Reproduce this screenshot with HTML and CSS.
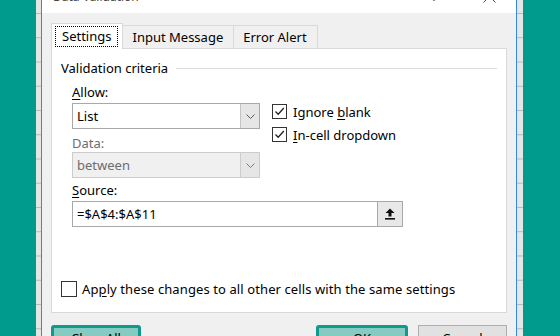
FILE: index.html
```html
<!doctype html>
<html lang="en">
  <head>
    <meta charset="UTF-8" />
    <title>Data Validation</title>
    <link rel="stylesheet" href="styles.css">
  </head>
  <body>
    <div class="screen">
      <div class="sheet-fill"></div>
      <div class="grid-strip"></div>

      <div class="dialog">
        <div class="title-bar">
          <span class="title-text">Data Validation</span>
          <span class="title-help">?</span>
          <svg class="title-close" width="13" height="13" viewBox="0 0 13 13">
            <path d="M0.5 0.5 L12.5 12.5 M12.5 0.5 L0.5 12.5" stroke="#444" stroke-width="1" fill="none" />
          </svg>
        </div>

        <div class="dialog-body">
          <div class="tabs">
            <div class="tab tab-active"><span class="focus-ring">Settings</span></div>
            <div class="tab">Input Message</div>
            <div class="tab">Error Alert</div>
          </div>

          <div class="panel">
            <div class="group-title">
              <span>Validation criteria</span>
              <div class="group-line"></div>
            </div>

            <div class="criteria">
              <div class="criteria-top">
                <div class="fields">
                  <div class="field-label"><u>A</u>llow:</div>
                  <div class="combo">
                    <div class="combo-value">List</div>
                    <div class="combo-button">
                      <svg width="9" height="5" viewBox="0 0 9 5"><path d="M0.5 0.5 L4.5 4.5 L8.5 0.5" stroke="#5c5c5c" fill="none" /></svg>
                    </div>
                  </div>

                  <div class="field-label field-label-data is-disabled">Data:</div>
                  <div class="combo combo-disabled">
                    <div class="combo-value">between</div>
                    <div class="combo-button">
                      <svg width="9" height="5" viewBox="0 0 9 5"><path d="M0.5 0.5 L4.5 4.5 L8.5 0.5" stroke="#7a7a7a" fill="none" /></svg>
                    </div>
                  </div>
                </div>

                <div class="options">
                  <div class="check-row">
                    <span class="check-box">
                      <svg width="13" height="13" viewBox="0 0 13 13"><path d="M2.5 6.5 L5.2 9.2 L10.8 3" stroke="#222" stroke-width="1.3" fill="none" /></svg>
                    </span>
                    <span>Ignore <u>b</u>lank</span>
                  </div>
                  <div class="check-row">
                    <span class="check-box">
                      <svg width="13" height="13" viewBox="0 0 13 13"><path d="M2.5 6.5 L5.2 9.2 L10.8 3" stroke="#222" stroke-width="1.3" fill="none" /></svg>
                    </span>
                    <span><u>I</u>n-cell dropdown</span>
                  </div>
                </div>
              </div>

              <div class="field-label field-label-source"><u>S</u>ource:</div>
              <div class="source-input">
                <div class="combo-value">=$A$4:$A$11</div>
                <div class="source-button">
                  <svg width="10" height="12" viewBox="0 0 10 12">
                    <path d="M5 0.5 L9.5 5 H6.5 V8.5 H3.5 V5 H0.5 Z" fill="#111" />
                    <rect x="0" y="10" width="10" height="1.6" fill="#111" />
                  </svg>
                </div>
              </div>
            </div>

            <div class="check-row apply-row">
              <span class="check-box check-box-empty"></span>
              <span class="apply-text">Ap<u>p</u>ly these changes to all other cells with the same settings</span>
            </div>
          </div>

          <div class="actions">
            <div class="btn btn-marked btn-clear">Clear All</div>
            <div class="btn btn-marked btn-ok">OK</div>
            <div class="btn">Cancel</div>
          </div>
        </div>
      </div>

      <div class="grid-strip grid-strip-right"></div>
      <div class="sheet-fill sheet-fill-right"></div>
    </div>
  </body>
</html>
```

FILE: styles.css
```css
body {
  margin: 0;
  padding: 0;
  font-family: "Noto Sans", "Open Sans", sans-serif;
  font-size: 13px;
  color: #000;
}

u {
  text-underline-offset: 2px;
}

.screen {
  display: flex;
  width: 560px;
  height: 336px;
  overflow: hidden;
  background: #009b8c;
}

.sheet-fill {
  width: 36px;
  flex: none;
}

.sheet-fill-right {
  flex: 1;
}

/* spreadsheet rows peeking out beside the dialog */
.grid-strip {
  width: 5px;
  flex: none;
  background-color: #e6e6e6;
  background-image: linear-gradient(#b8b8b8 0 1px, transparent 1px);
  background-size: 100% 24.25px;
  background-position: 0 13px;
}

.grid-strip-right {
  width: 6px;
}

.dialog {
  width: 476px;
  flex: none;
  box-sizing: border-box;
  border-left: 1px solid #2f8ae6;
  border-right: 1px solid #2f8ae6;
  background: #f0f0f0;
  display: flex;
  flex-direction: column;
}

.title-bar {
  height: 13px;
  flex: none;
  background: #fff;
  display: flex;
  align-items: flex-start;
  overflow: hidden;
  padding-left: 11px;
  font-size: 12px;
}

.title-text {
  margin-top: -11px;
  line-height: 16px;
  color: #444;
}

.title-help {
  margin-left: auto;
  margin-top: -11px;
  line-height: 16px;
  color: #555;
}

.title-close {
  margin-top: -10px;
  margin-left: 46px;
  margin-right: 20px;
}

.dialog-body {
  padding: 10px 9px 0;
}

/* tabs */
.tabs {
  display: flex;
  align-items: flex-end;
  height: 26px;
  margin-bottom: -1px;
  position: relative;
  z-index: 1;
}

.tab {
  height: 23px;
  box-sizing: border-box;
  margin-bottom: 1px;
  padding: 0 10px 0 9px;
  line-height: 22px;
  border: 1px solid #d9d9d9;
  border-bottom: none;
  background: #f0f0f0;
}

.tab + .tab {
  margin-left: -1px;
}

.tab-active {
  height: 26px;
  margin-bottom: 0;
  padding: 2px 4px 0 3px;
  background: #fff;
}

.focus-ring {
  display: block;
  padding: 0 6px;
  line-height: 19px;
  border: 1px dotted #000;
}

/* settings panel */
.panel {
  height: 265px;
  box-sizing: border-box;
  background: #fff;
  border: 1px solid #d9d9d9;
  padding: 11px 9px 12px;
  display: flex;
  flex-direction: column;
}

.group-title {
  display: flex;
  align-items: center;
  gap: 8px;
  line-height: 16px;
}

.group-line {
  flex: 1;
  height: 1px;
  background: #dcdcdc;
}

.criteria {
  padding-left: 11px;
  margin-top: 8px;
}

.criteria-top {
  display: flex;
  gap: 12px;
}

.fields {
  width: 188px;
}

.field-label {
  line-height: 16px;
  margin-bottom: 3px;
}

.field-label-data {
  margin-top: 6px;
  margin-bottom: 1px;
}

.field-label-source {
  margin-top: 4px;
}

.is-disabled {
  color: #6d6d6d;
}

.combo {
  display: flex;
  height: 26px;
  box-sizing: border-box;
  border: 1px solid #a8a8a8;
  background: #fff;
}

.combo-value {
  flex: 1;
  padding-left: 4px;
  line-height: 24px;
}

.combo-button {
  width: 18px;
  border-left: 1px solid #c4c4c4;
  background: #e6e6e6;
  display: flex;
  align-items: center;
  justify-content: center;
}

.combo-disabled {
  border-color: #cccccc;
  background: #f0f0f0;
  color: #6d6d6d;
}

.combo-disabled .combo-button {
  border-left-color: #cccccc;
}

.options {
  padding-top: 16px;
}

.check-row {
  display: flex;
  align-items: center;
  gap: 6px;
  height: 23px;
}

.check-box {
  width: 15px;
  height: 15px;
  flex: none;
  box-sizing: border-box;
  border: 1px solid #333;
  background: #fff;
  display: flex;
  align-items: center;
  justify-content: center;
}

.source-input {
  display: flex;
  width: 331px;
  height: 26px;
  box-sizing: border-box;
  border: 1px solid #a8a8a8;
  background: #fff;
}

.source-button {
  width: 24px;
  border-left: 1px solid #a8a8a8;
  background: #e8e8e8;
  display: flex;
  align-items: center;
  justify-content: center;
}

.apply-row {
  margin-top: auto;
  gap: 5px;
}

.apply-text {
  letter-spacing: 0.1px;
}

.check-box-empty {
  width: 16px;
  height: 16px;
}

/* bottom buttons */
.actions {
  display: flex;
  gap: 10px;
  margin-top: 12px;
}

.btn {
  width: 89px;
  height: 26px;
  box-sizing: border-box;
  border: 1px solid #adadad;
  background: #e1e1e1;
  text-align: center;
  line-height: 24px;
}

.btn-marked {
  border: 3px solid #0f9a8b;
  border-radius: 3px;
  background: #86cbc2;
  line-height: 20px;
}

.btn-clear {
  width: 90px;
}

.btn-ok {
  width: 92px;
  margin-left: auto;
}
```
